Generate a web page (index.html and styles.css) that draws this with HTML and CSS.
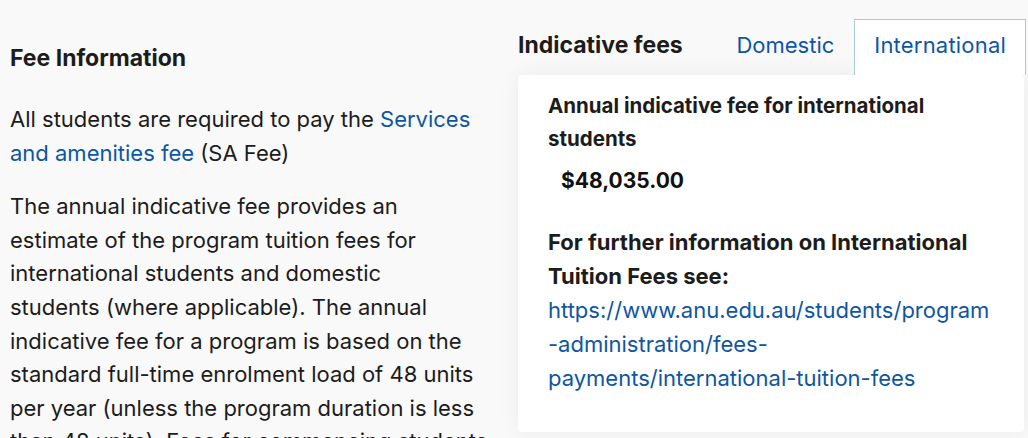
FILE: index.html
```html
<!DOCTYPE html>
<html lang="en">
<head>
<meta charset="utf-8">
<title>Fee Information</title>
<link rel="stylesheet" href="styles.css">
</head>
<body>
<div class="page">
  <section class="info">
    <h2 class="info-title">Fee Information</h2>
    <p class="info-text">All students are required to pay the <a href="#" class="link">Services<br>and amenities fee</a> (SA Fee)</p>
    <p class="info-text">The annual indicative fee provides an<br>estimate of the program tuition fees for<br>international students and domestic<br>students (where applicable). The annual<br>indicative fee for a program is based on the<br>standard full-time enrolment load of 48 units<br>per year (unless the program duration is less<br>than 48 units). Fees for commencing students are set for the first year of study.</p>
  </section>
  <section class="fees">
    <div class="fees-head">
      <h2 class="fees-title">Indicative fees</h2>
      <div class="tabs">
        <span class="tab">Domestic</span>
        <span class="tab tab-active">International</span>
      </div>
    </div>
    <div class="card">
      <h3 class="card-label">Annual indicative fee for international students</h3>
      <p class="card-amount">$48,035.00</p>
      <p class="card-more">For further information on International Tuition Fees see:</p>
      <a href="#" class="card-link">https://www.anu.edu.au/students/program<br>-administration/fees-<br>payments/international-tuition-fees</a>
    </div>
  </section>
</div>
</body>
</html>
```

FILE: styles.css
```css
html, body {
  margin: 0;
  padding: 0;
}
body {
  background: #f9f9f9;
  font-family: Inter, "Liberation Sans", sans-serif;
  color: #1c1c1c;
  overflow: hidden;
  height: 438px;
}
.page {
  display: flex;
  align-items: flex-start;
  padding-left: 10px;
}
.info {
  width: 490px;
  flex: none;
  padding-top: 43px;
}
.info-title {
  margin: 0 0 30px;
  font-size: 23px;
  line-height: 30px;
  font-weight: 700;
}
.info-text {
  margin: 0 0 20px;
  font-size: 22px;
  line-height: 33.6px;
}
.link {
  color: #0e56a2;
  text-decoration: none;
}
.fees {
  margin-left: 18px;
  width: 506px;
  flex: none;
}
.fees-head {
  display: flex;
  align-items: flex-end;
  padding-top: 19px;
}
.fees-title {
  margin: 0;
  font-size: 23px;
  line-height: 30px;
  font-weight: 700;
  align-self: center;
  padding-bottom: 4px;
}
.tabs {
  display: flex;
  margin-left: auto;
  margin-right: -2px;
}
.tab {
  color: #0e56a2;
  font-size: 22px;
  line-height: 50px;
  padding: 0 19px 5px;
  border: 1px solid transparent;
  border-bottom: none;
}
.tab-active {
  background: #fff;
  border-color: #a9c9d6;
  letter-spacing: 0.2px;
}
.card {
  background: #fff;
  border-radius: 4px;
  box-shadow: 0 0 22px rgba(0, 0, 0, 0.06);
  padding: 14px 30px 37px;
}
.card-label {
  margin: 0;
  font-size: 20.5px;
  line-height: 33px;
  font-weight: 700;
}
.card-amount {
  margin: 11px 0 0 13px;
  font-size: 21px;
  line-height: 30px;
  font-weight: 700;
  color: #111;
}
.card-more {
  margin: 29px 0 0;
  font-size: 22px;
  line-height: 34px;
  font-weight: 700;
}
.card-link {
  display: block;
  color: #0e56a2;
  text-decoration: none;
  font-size: 22px;
  line-height: 34px;
}
```
